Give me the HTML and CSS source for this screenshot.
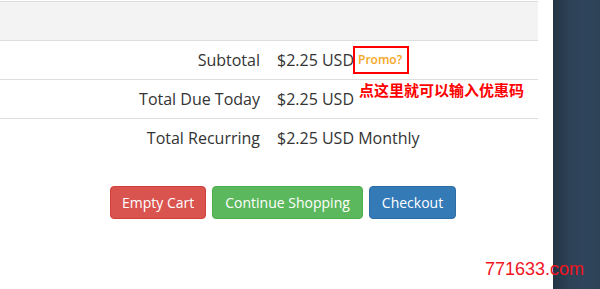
FILE: index.html
```html
<!DOCTYPE html>
<html lang="en">
<head>
    <meta charset="UTF-8">
    <title>Cart Totals</title>
    <link rel="stylesheet" href="styles.css">
</head>
<body>
    <div class="page">
        <div class="cart">
            <div class="cart-head"></div>
            <div class="total-row">
                <span class="total-label">Subtotal</span>
                <span class="total-value">$2.25 USD<a class="promo">Promo?</a></span>
            </div>
            <div class="total-row">
                <span class="total-label">Total Due Today</span>
                <span class="total-value">$2.25 USD</span>
            </div>
            <div class="total-row last">
                <span class="total-label">Total Recurring</span>
                <span class="total-value">$2.25 USD Monthly</span>
            </div>

            <div class="cart-actions">
                <button class="btn btn-danger">Empty Cart</button>
                <button class="btn btn-success">Continue Shopping</button>
                <button class="btn btn-primary">Checkout</button>
            </div>

            <!-- annotation drawn over the screenshot -->
            <div class="note">点这里就可以输入优惠码</div>
        </div>
        <div class="sidebar"></div>
    </div>
    <div class="watermark">771633.com</div>
</body>
</html>
```

FILE: styles.css
```css
body, html {
    margin: 0;
    padding: 0;
    width: 100%;
    height: 100%;
    background: #fff;
    font-family: 'Open Sans', 'Liberation Sans', sans-serif;
    color: #333;
    overflow: hidden;
}

body {
    position: relative;
}

.page {
    display: flex;
    gap: 15px;
    height: 100%;
}

/* Cart totals */
.cart {
    position: relative;
    width: 538px;
    padding-top: 1px;
}

.cart-head {
    height: 38px;
    background-color: #f3f3f3;
    border-top: 1px solid #dddddd;
    border-bottom: 1px solid #dddddd;
}

.total-row {
    display: flex;
    font-size: 16px;
    line-height: 22px;
    border-bottom: 1px solid #dddddd;
}

.total-row.last {
    border-bottom: none;
}

.total-label {
    width: 260px;
    text-align: right;
    padding: 8px 0;
}

.total-value {
    padding: 8px 0 8px 17px;
    white-space: nowrap;
}

.promo {
    display: inline-block;
    margin: -3px 0 -3px -1px;
    padding: 3px 5px 3px 3px;
    border: 2px solid #ff0000;
    color: #f5a623;
    font-size: 12px;
    font-weight: 600;
    line-height: 18px;
    vertical-align: top;
}

/* Buttons */
.cart-actions {
    display: flex;
    gap: 6px;
    padding: 29px 0 0 110px;
}

.btn {
    font-family: 'Open Sans', 'Liberation Sans', sans-serif;
    font-size: 14px;
    line-height: 19px;
    padding: 6px 12px;
    border: 1px solid transparent;
    border-radius: 4px;
    color: #fff;
    cursor: pointer;
}

.btn-danger {
    padding: 6px 11px;
    background-color: #d9534f;
    border-color: #d43f3a;
}

.btn-success {
    background-color: #5cb85c;
    border-color: #4cae4c;
}

.btn-primary {
    background-color: #337ab7;
    border-color: #2e6da4;
}

.note {
    position: absolute;
    left: 359px;
    top: 80px;
    color: #ff0000;
    font-family: 'Noto Sans CJK SC', sans-serif;
    font-size: 15px;
    font-weight: bold;
    line-height: 20px;
}

/* Dark sidebar */
.sidebar {
    flex: 1;
    background: linear-gradient(to right, #233444, #2d4257 35%, #2f455b 70%, #2d4257);
}

.watermark {
    position: absolute;
    left: 485px;
    top: 258px;
    color: #f0141e;
    font-family: 'Liberation Sans', Arial, sans-serif;
    font-size: 18px;
    line-height: 22px;
}
```
